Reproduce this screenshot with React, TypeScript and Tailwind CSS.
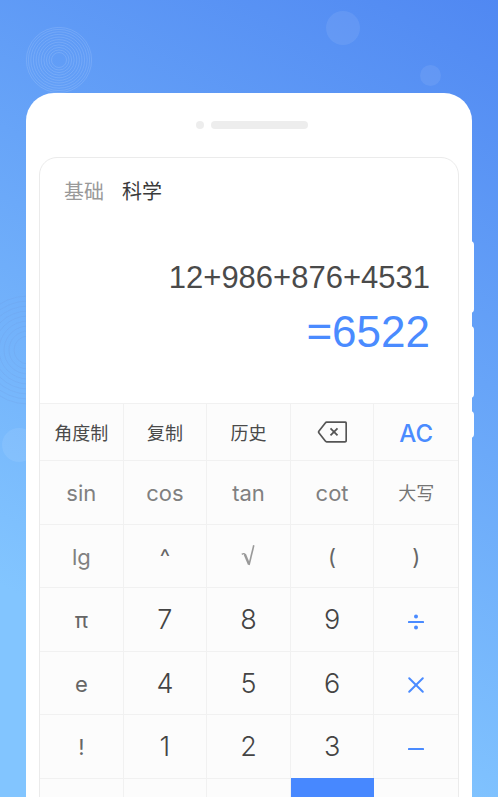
import React, { useState } from 'react';
import clsx from 'clsx';

type KeyKind = 'tool' | 'func' | 'symbol' | 'digit' | 'cjk' | 'clear' | 'icon' | 'operator' | 'equals';

interface CalcKey {
  name: string;
  kind: KeyKind;
  content?: React.ReactNode;
}

const DeleteIcon = () => (
  <svg className="w-[30px] h-[22px]" viewBox="0 0 30 22" fill="none" stroke="#555555" strokeLinejoin="round">
    <path d="M9.7 1.2H28a1.2 1.2 0 0 1 1.2 1.2V19.6a1.2 1.2 0 0 1-1.2 1.2H9.7a1.8 1.8 0 0 1-1.4-.7L2 12a1.6 1.6 0 0 1 0-2L8.3 1.9a1.8 1.8 0 0 1 1.4-.7Z" strokeWidth="1.7" />
    <path d="M13.5 7.3l7 7M20.5 7.3l-7 7" strokeWidth="1.8" />
  </svg>
);

const RootIcon = () => (
  <svg className="w-[14px] h-[22px]" viewBox="0 0 14 22" fill="none" stroke="#999999">
    <path d="M.8 9.4Q3.4 7.6 4.2 10" strokeWidth="1.4" />
    <path d="M3.8 9.2L8 19.4" strokeWidth="2.4" />
    <path d="M8 20L12.8.2" strokeWidth="1.6" />
  </svg>
);

const DivideIcon = () => (
  <svg className="w-[18px] h-[18px]" viewBox="0 0 18 18" fill="#4a8bff">
    <rect x="1" y="8" width="16" height="2" rx=".6" />
    <circle cx="9" cy="3.5" r="2" />
    <circle cx="9" cy="14.5" r="2" />
  </svg>
);

const MultiplyIcon = () => (
  <svg className="w-[18px] h-[18px]" viewBox="0 0 18 18" stroke="#4a8bff" strokeWidth="2" strokeLinecap="round">
    <path d="M2.2 2.2L15.8 15.8M15.8 2.2L2.2 15.8" />
  </svg>
);

const MinusIcon = () => (
  <svg className="w-[18px] h-[18px]" viewBox="0 0 18 18" fill="#4a8bff">
    <rect x="1" y="8" width="16" height="2" rx=".6" />
  </svg>
);

const kindStyles: Record<KeyKind, string> = {
  tool: 'pt-[2px] text-[18px] text-[#4a4a4a]',
  func: 'pt-[2px] text-[22px] text-[#808080]',
  symbol: 'pt-[2px] text-[22px] text-[#666666]',
  digit: 'pt-[2px] text-[27px] font-light text-[#444444]',
  cjk: 'pt-[2px] text-[18px] text-[#757575]',
  clear: 'pt-[4px] text-[24px] font-medium text-[#4a8bff]',
  icon: '',
  operator: 'pt-[4px]',
  equals: 'bg-[#4788ff]',
};

const keys: CalcKey[] = [
  { name: '角度制', kind: 'tool' },
  { name: '复制', kind: 'tool' },
  { name: '历史', kind: 'tool' },
  { name: '删除', kind: 'icon', content: <DeleteIcon /> },
  { name: 'AC', kind: 'clear' },
  { name: 'sin', kind: 'func' },
  { name: 'cos', kind: 'func' },
  { name: 'tan', kind: 'func' },
  { name: 'cot', kind: 'func' },
  { name: '大写', kind: 'cjk' },
  { name: 'lg', kind: 'func' },
  { name: '^', kind: 'symbol' },
  { name: '√', kind: 'icon', content: <RootIcon /> },
  { name: '(', kind: 'symbol' },
  { name: ')', kind: 'symbol' },
  { name: 'π', kind: 'symbol' },
  { name: '7', kind: 'digit' },
  { name: '8', kind: 'digit' },
  { name: '9', kind: 'digit' },
  { name: '÷', kind: 'operator', content: <DivideIcon /> },
  { name: 'e', kind: 'symbol' },
  { name: '4', kind: 'digit' },
  { name: '5', kind: 'digit' },
  { name: '6', kind: 'digit' },
  { name: '×', kind: 'operator', content: <MultiplyIcon /> },
  { name: '!', kind: 'symbol' },
  { name: '1', kind: 'digit' },
  { name: '2', kind: 'digit' },
  { name: '3', kind: 'digit' },
  { name: '−', kind: 'operator', content: <MinusIcon /> },
  { name: '%', kind: 'symbol', content: <span /> },
  { name: '0', kind: 'digit', content: <span /> },
  { name: '.', kind: 'digit', content: <span /> },
  { name: '=', kind: 'equals', content: <span /> },
  { name: '+', kind: 'operator', content: <span /> },
];

const Backdrop = () => (
  <div className="absolute inset-0 overflow-hidden" aria-hidden="true">
    <svg className="absolute left-[25px] top-[26px] w-[68px] h-[68px]" viewBox="0 0 68 68" fill="none" stroke="#ffffff" strokeOpacity=".14">
      {[7.5, 10, 12.6, 15.2, 17.8, 20.4, 23, 25.6, 28.2, 30.6, 32.6].map(r => (
        <circle key={r} cx="34" cy="34" r={r} strokeWidth=".9" />
      ))}
    </svg>
    <svg className="absolute -left-[28px] top-[294px] w-[112px] h-[112px]" viewBox="0 0 112 112" fill="none" stroke="#6d94dc" strokeOpacity=".2">
      {[14, 19, 24, 29, 34, 39, 44, 49, 54].map(r => (
        <circle key={r} cx="56" cy="56" r={r} strokeWidth="1" />
      ))}
    </svg>
    <div className="absolute left-[2px] top-[428px] w-[34px] h-[34px] rounded-full bg-white/8" />
    <div className="absolute right-[138px] top-[11px] w-[34px] h-[34px] rounded-full bg-white/8" />
    <div className="absolute right-[57px] top-[65px] w-[21px] h-[21px] rounded-full bg-white/8" />
  </div>
);

const App: React.FC = () => {
  const [tab, setTab] = useState('科学');
  const [expression, setExpression] = useState('12+986+876+4531');
  const [result, setResult] = useState('6522');

  const handleKey = (key: CalcKey) => {
    if (key.name === 'AC') {
      setExpression('');
      setResult('0');
    } else if (key.name === '删除') {
      setExpression(expression.slice(0, -1));
    } else if (key.name === '=') {
      setExpression(result);
    } else if (key.kind !== 'tool' && key.kind !== 'cjk') {
      setExpression(expression + key.name);
    }
  };

  return (
    <div className="relative h-screen overflow-hidden bg-[linear-gradient(208deg,#5088f2_0%,#82c5ff_80%)] px-[26px] pt-[93px] font-['Inter','Noto_Sans_CJK_SC',sans-serif]">
      <Backdrop />

      {/* Phone body */}
      <div className="relative rounded-t-[28px] bg-white px-[13px] pb-8">
        {/* Side buttons */}
        <div className="absolute -right-[2px] top-[148px] w-1 h-[72px] rounded-r-sm bg-white" />
        <div className="absolute -right-[2px] top-[233px] w-1 h-[72px] rounded-r-sm bg-white" />
        <div className="absolute -right-[2px] top-[318px] w-1 h-[27px] rounded-r-sm bg-white" />

        {/* Speaker */}
        <div className="flex h-16 items-center justify-center gap-[7px] pl-[6px]">
          <span className="w-2 h-2 rounded-full bg-[#ededed]" />
          <span className="w-[97px] h-2 rounded-full bg-[#ededed]" />
        </div>

        {/* Calculator screen */}
        <main className="overflow-hidden rounded-t-[18px] border border-[#ebebeb] bg-white">
          <nav className="flex gap-[18px] px-6 pt-[18px] text-[20px] leading-8">
            {['基础', '科学'].map(name => (
              <button
                key={name}
                onClick={() => setTab(name)}
                className={tab === name ? 'text-[#3a3a3a]' : 'text-[#999999]'}
              >
                {name}
              </button>
            ))}
          </nav>

          <div className="h-[195px] px-7 pt-[50px] text-right font-['Liberation_Sans',Arial,sans-serif]">
            <p className="text-[31px] leading-10 text-[#4a4a4a]">{expression}</p>
            <p className="pt-2 text-[44px] leading-[52px] text-[#4a8bff]">={result}</p>
          </div>

          {/* Keypad */}
          <div className="grid grid-cols-5 grid-rows-[57px_64px_63px_64px_63px_64px_63px]">
            {keys.map((key, index) => (
              <button
                key={key.name}
                aria-label={key.name}
                onClick={() => handleKey(key)}
                className={clsx(
                  'flex items-center justify-center border-t',
                  index % 5 !== 4 && 'border-r',
                  key.kind === 'equals' ? 'border-[#4788ff]' : 'border-[#f1f1f1] bg-[#fcfcfc]',
                  kindStyles[key.kind]
                )}
              >
                {key.content ?? key.name}
              </button>
            ))}
          </div>
        </main>
      </div>
    </div>
  );
};

export default App;
